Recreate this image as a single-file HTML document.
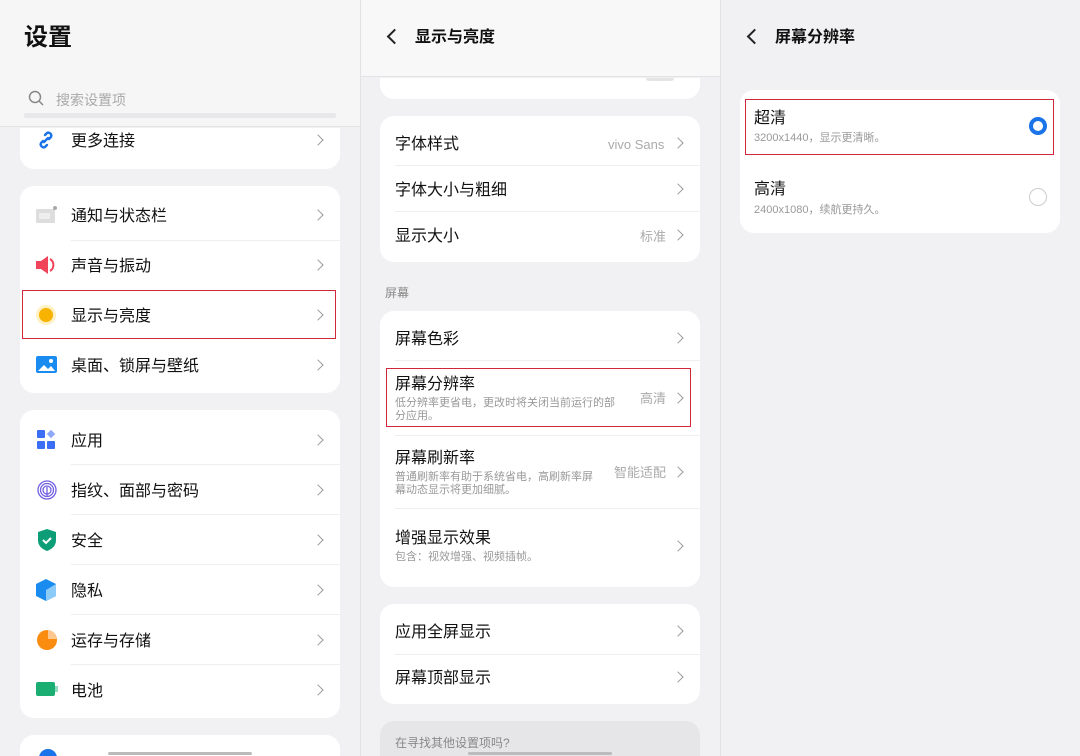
<!DOCTYPE html>
<html><head><meta charset="utf-8"><style>
*{margin:0;padding:0;box-sizing:border-box}
html{width:1080px;height:756px;overflow:hidden}
body{width:1080px;height:756px;overflow:hidden;background:#f1f1f3;font-family:"Liberation Sans","Noto Sans CJK SC",sans-serif;color:#111;position:relative}
.a{position:absolute}
.card{position:absolute;background:#fff;border-radius:14px}
.t{position:absolute;font-size:16px;line-height:20px;white-space:nowrap;transform:translateY(2px)}
.s{position:absolute;font-size:11px;line-height:13px;color:#999;white-space:nowrap;transform:translateY(1px)}
.v{position:absolute;font-size:13px;color:#aaa;line-height:16px;white-space:nowrap;transform:translateY(1px)}
.ch{position:absolute;width:8px;height:8px;border-right:1.6px solid #9a9a9a;border-top:1.6px solid #9a9a9a;transform:rotate(45deg)}
.sep{position:absolute;height:1px;background:#eee}
.red{position:absolute;border:1.5px solid #d0283a}
.back{position:absolute;width:11px;height:11px;border-left:2.2px solid #222;border-bottom:2.2px solid #222;transform:rotate(45deg)}
.div{position:absolute;top:0;width:1px;height:756px;background:#e2e2e4}
.bar{position:absolute;height:3px;background:#bbb;border-radius:2px;top:752px}
</style></head><body>
<!-- panel 1 -->
<div class="a" style="left:0;top:0;width:360px;height:127px;background:#f6f6f7;border-bottom:1px solid #e3e3e5"></div>
<div class="t" style="left:24px;top:22px;font-size:24px;line-height:28px;font-weight:bold">设置</div>
<svg class="a" style="left:28px;top:90px" width="16" height="16"><circle cx="7" cy="7" r="5.5" fill="none" stroke="#888" stroke-width="1.5"/><path d="M11 11l4 4" stroke="#888" stroke-width="1.5"/></svg>
<div class="t" style="left:56px;top:88px;font-size:14px;color:#aaa">搜索设置项</div>
<div class="a" style="left:24px;top:113px;width:312px;height:5px;background:#e8e8ea;border-radius:2px"></div>
<div class="card" style="left:20px;top:128px;width:320px;height:41px;border-radius:0 0 14px 14px"></div>
<svg class="a" style="left:36px;top:130px" width="20" height="20"><path d="M8 12l4-4M9 5l2-2a3 3 0 014 4l-2 2M11 15l-2 2a3 3 0 01-4-4l2-2" fill="none" stroke="#1a73e8" stroke-width="2.4" stroke-linecap="round"/></svg>
<div class="t" style="left:71px;top:130px">更多连接</div><div class="ch" style="left:314px;top:136px"></div>

<div class="card" style="left:20px;top:186px;width:320px;height:207px"></div>
<svg class="a" style="left:36px;top:206px" width="22" height="18"><rect x="0" y="3" width="19" height="14" rx="1" fill="#ddd"/><rect x="3" y="7" width="11" height="6" fill="#eee"/><circle cx="19" cy="2" r="2" fill="#aaa"/></svg>
<div class="t" style="left:71px;top:205px">通知与状态栏</div><div class="ch" style="left:314px;top:211px"></div>
<div class="sep" style="left:71px;top:240px;width:269px"></div>
<svg class="a" style="left:36px;top:255px" width="22" height="20"><path d="M0 6h5l7-5v18l-7-5H0z" fill="#f0445a"/><path d="M14 4a7 7 0 010 12" fill="none" stroke="#f0445a" stroke-width="2"/></svg>
<div class="t" style="left:71px;top:255px">声音与振动</div><div class="ch" style="left:314px;top:261px"></div>
<svg class="a" style="left:35px;top:304px" width="22" height="22"><circle cx="11" cy="11" r="10" fill="#fff1c2"/><circle cx="11" cy="11" r="7" fill="#f8b200"/></svg>
<div class="t" style="left:71px;top:305px">显示与亮度</div><div class="ch" style="left:314px;top:311px"></div>
<div class="red" style="left:22px;top:290px;width:314px;height:49px"></div>
<svg class="a" style="left:36px;top:356px" width="21" height="18"><rect width="21" height="17" rx="2" fill="#1a8cf0"/><path d="M2 15l6-6 4 4 3-3 4 5z" fill="#fff"/><circle cx="15" cy="5" r="2" fill="#fff"/></svg>
<div class="t" style="left:71px;top:355px">桌面、锁屏与壁纸</div><div class="ch" style="left:314px;top:361px"></div>

<div class="card" style="left:20px;top:410px;width:320px;height:308px"></div>
<svg class="a" style="left:37px;top:430px" width="20" height="20"><rect x="0" y="0" width="8" height="8" rx="1" fill="#3b6df5"/><rect x="11" y="1" width="6" height="6" fill="#8fa9fa" transform="rotate(45 14 4)"/><rect x="0" y="11" width="8" height="8" rx="1" fill="#3b6df5"/><rect x="10" y="11" width="8" height="8" rx="1" fill="#3b6df5"/></svg>
<div class="t" style="left:71px;top:430px">应用</div><div class="ch" style="left:314px;top:436px"></div>
<div class="sep" style="left:71px;top:464px;width:269px"></div>
<svg class="a" style="left:36px;top:479px" width="22" height="22" fill="none" stroke="#7060e0" stroke-width="1.3"><circle cx="11" cy="11" r="9"/><circle cx="11" cy="11" r="6.5"/><circle cx="11" cy="11" r="4"/><path d="M11 8v10"/></svg>
<div class="t" style="left:71px;top:480px">指纹、面部与密码</div><div class="ch" style="left:314px;top:486px"></div>
<div class="sep" style="left:71px;top:514px;width:269px"></div>
<svg class="a" style="left:37px;top:529px" width="20" height="22"><path d="M10 0l9 3v8c0 6-4 9-9 11C5 20 1 17 1 11V3z" fill="#0d9e78"/><path d="M6 11l3 3 5-5" fill="none" stroke="#fff" stroke-width="2"/></svg>
<div class="t" style="left:71px;top:530px">安全</div><div class="ch" style="left:314px;top:536px"></div>
<div class="sep" style="left:71px;top:564px;width:269px"></div>
<svg class="a" style="left:36px;top:579px" width="21" height="22"><path d="M10 0l10 5v12l-10 5L0 17V5z" fill="#1a8cf0"/><path d="M10 11l10-6v12l-10 5z" fill="#8ccaf8"/></svg>
<div class="t" style="left:71px;top:580px">隐私</div><div class="ch" style="left:314px;top:586px"></div>
<div class="sep" style="left:71px;top:614px;width:269px"></div>
<svg class="a" style="left:36px;top:629px" width="22" height="22"><circle cx="11" cy="11" r="10" fill="#fa8c10"/><path d="M12 1a10 10 0 019 9h-9z" fill="#fdc890"/></svg>
<div class="t" style="left:71px;top:630px">运存与存储</div><div class="ch" style="left:314px;top:636px"></div>
<div class="sep" style="left:71px;top:664px;width:269px"></div>
<svg class="a" style="left:36px;top:682px" width="22" height="14"><rect width="19" height="14" rx="2" fill="#1aae72"/><rect x="19" y="4" width="3" height="6" fill="#8fdbbb"/></svg>
<div class="t" style="left:71px;top:680px">电池</div><div class="ch" style="left:314px;top:686px"></div>
<div class="card" style="left:20px;top:735px;width:320px;height:21px;border-radius:14px 14px 0 0"></div>
<svg class="a" style="left:38px;top:748px" width="20" height="8"><circle cx="10" cy="10" r="9" fill="#1a73e8"/></svg>
<div class="bar" style="left:108px;width:144px"></div>

<div class="div" style="left:360px"></div>
<!-- panel 2 -->
<div class="a" style="left:361px;top:0;width:359px;height:77px;background:#f8f8f8;border-bottom:1px solid #e3e3e5"></div>
<div class="back" style="left:389px;top:31px"></div>
<div class="t" style="left:415px;top:26px;font-weight:bold">显示与亮度</div>
<div class="card" style="left:380px;top:78px;width:320px;height:21px;border-radius:0 0 14px 14px"></div>
<div class="a" style="left:646px;top:78px;width:28px;height:3px;border-radius:0 0 3px 3px;background:#e4e4e4"></div>
<div class="card" style="left:380px;top:116px;width:320px;height:146px"></div>
<div class="t" style="left:395px;top:133px">字体样式</div><div class="v" style="left:608px;top:136px">vivo Sans</div><div class="ch" style="left:674px;top:139px"></div>
<div class="sep" style="left:395px;top:165px;width:305px"></div>
<div class="t" style="left:395px;top:179px">字体大小与粗细</div><div class="ch" style="left:674px;top:185px"></div>
<div class="sep" style="left:395px;top:211px;width:305px"></div>
<div class="t" style="left:395px;top:225px">显示大小</div><div class="v" style="left:640px;top:228px">标准</div><div class="ch" style="left:674px;top:231px"></div>
<div class="s" style="left:385px;top:286px;font-size:12px;color:#888">屏幕</div>
<div class="card" style="left:380px;top:311px;width:320px;height:276px"></div>
<div class="t" style="left:395px;top:328px">屏幕色彩</div><div class="ch" style="left:674px;top:334px"></div>
<div class="sep" style="left:395px;top:360px;width:305px"></div>
<div class="t" style="left:395px;top:373px">屏幕分辨率</div>
<div class="s" style="left:395px;top:396px;line-height:13px">低分辨率更省电，更改时将关闭当前运行的部<br>分应用。</div>
<div class="v" style="left:640px;top:390px">高清</div><div class="ch" style="left:674px;top:394px"></div>
<div class="red" style="left:386px;top:368px;width:305px;height:59px"></div>
<div class="sep" style="left:395px;top:435px;width:305px"></div>
<div class="t" style="left:395px;top:447px">屏幕刷新率</div>
<div class="s" style="left:395px;top:470px">普通刷新率有助于系统省电，高刷新率屏<br>幕动态显示将更加细腻。</div>
<div class="v" style="left:614px;top:464px">智能适配</div><div class="ch" style="left:674px;top:468px"></div>
<div class="sep" style="left:395px;top:508px;width:305px"></div>
<div class="t" style="left:395px;top:527px">增强显示效果</div>
<div class="s" style="left:395px;top:550px">包含：视效增强、视频插帧。</div>
<div class="ch" style="left:674px;top:542px"></div>
<div class="card" style="left:380px;top:604px;width:320px;height:100px"></div>
<div class="t" style="left:395px;top:621px">应用全屏显示</div><div class="ch" style="left:674px;top:627px"></div>
<div class="sep" style="left:395px;top:654px;width:305px"></div>
<div class="t" style="left:395px;top:667px">屏幕顶部显示</div><div class="ch" style="left:674px;top:673px"></div>
<div class="card" style="left:380px;top:721px;width:320px;height:35px;background:#e6e6e8;border-radius:14px 14px 0 0"></div>
<div class="s" style="left:395px;top:736px;font-size:12px;color:#888">在寻找其他设置项吗?</div>
<div class="bar" style="left:468px;width:144px"></div>

<div class="div" style="left:720px"></div>
<!-- panel 3 -->
<div class="back" style="left:749px;top:31px"></div>
<div class="t" style="left:775px;top:26px;font-weight:bold">屏幕分辨率</div>
<div class="card" style="left:740px;top:90px;width:320px;height:143px"></div>
<div class="t" style="left:754px;top:107px">超清</div>
<div class="s" style="left:754px;top:131px">3200x1440，显示更清晰。</div>
<div class="a" style="left:1029px;top:117px;width:18px;height:18px;border-radius:50%;border:4px solid #1a73e8"></div>
<div class="red" style="left:745px;top:99px;width:309px;height:56px"></div>
<div class="t" style="left:754px;top:178px">高清</div>
<div class="s" style="left:754px;top:203px">2400x1080，续航更持久。</div>
<div class="a" style="left:1029px;top:188px;width:18px;height:18px;border-radius:50%;border:1.5px solid #ccc"></div>
</body></html>
